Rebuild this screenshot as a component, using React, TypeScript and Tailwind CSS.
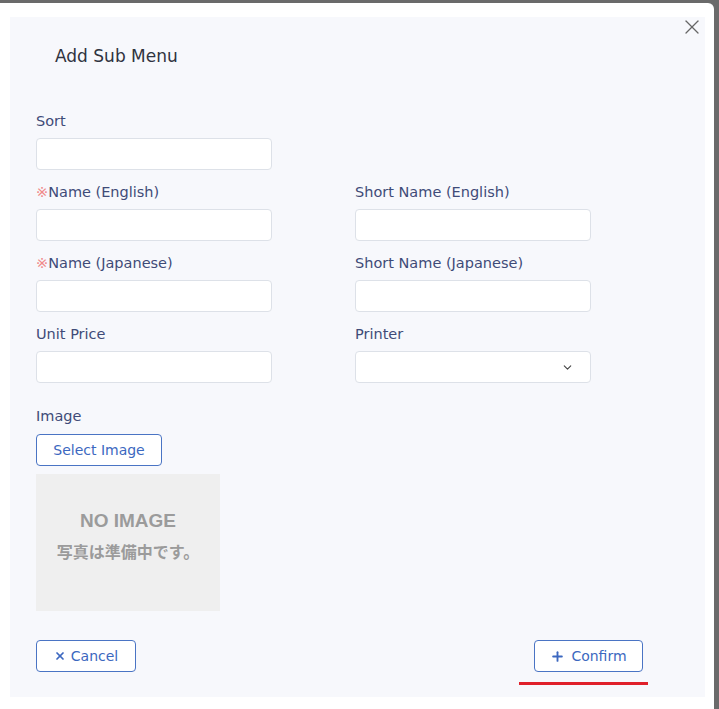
import { X, Plus, ChevronDown } from "lucide-react";

const font = { fontFamily: '"DejaVu Sans", "Noto Sans CJK JP", sans-serif' };

function Field({ label, required, select }: { label: string; required?: boolean; select?: boolean }) {
  return (
    <div className="flex flex-col">
      <label className="text-[14.5px] leading-[20px] text-[#3f4b78] mb-[7px] whitespace-nowrap">
        {required && <span className="text-[#f08a8a]">※</span>}
        {label}
      </label>
      <div className="relative h-[32px] w-[236px] rounded-[4px] border border-[#dde1e8] bg-white">
        {select && (
          <ChevronDown className="absolute right-[16px] top-[9px] w-[13px] h-[13px] text-[#444]" strokeWidth={2} />
        )}
      </div>
    </div>
  );
}

export default function App() {
  return (
    <div className="w-[719px] h-[709px] bg-[#6a6a6a] pt-[3px] pr-[5px] overflow-hidden" style={font}>
      <div className="h-[706px] bg-white rounded-tr-[6px] pl-[10px] pr-[9px] pt-[14px] pb-[12px]">
        <div className="relative h-full bg-[#f7f8fc] pl-[26px] pt-[27px] pr-[62px] pb-[25px] flex flex-col">
          <button className="absolute right-[1px] -top-[2px] text-[#666]">
            <X className="w-[24px] h-[24px]" strokeWidth={1.3} />
          </button>

          <h2 className="pl-[19px] text-[17px] leading-[24px] text-[#2f3340]">Add Sub Menu</h2>

          <div className="mt-[43px] grid grid-cols-[236px_236px] gap-x-[83px] gap-y-[12px]">
            <Field label="Sort" />
            <div />
            <Field label="Name (English)" required />
            <Field label="Short Name (English)" />
            <Field label="Name (Japanese)" required />
            <Field label="Short Name (Japanese)" />
            <Field label="Unit Price" />
            <Field label="Printer" select />
          </div>

          <div className="mt-[23px] text-[14.5px] leading-[20px] text-[#3f4b78]">Image</div>
          <button className="mt-[8px] w-[126px] h-[32px] rounded-[4px] border border-[#4a74c4] bg-white text-[14px] text-[#3c68c0]">
            Select Image
          </button>
          <div className="mt-[8px] w-[184px] h-[137px] bg-[#efefef] flex flex-col items-center justify-center text-[#9b9b9b] font-bold">
            <div
              className="text-[19px] leading-[22px] -mt-[14px]"
              style={{ fontFamily: '"Liberation Sans", Arial, sans-serif' }}
            >
              NO IMAGE
            </div>
            <div className="text-[16px] leading-[20px] mt-[9px]" style={{ fontFamily: '"Noto Sans CJK JP", sans-serif' }}>
              写真は準備中です。
            </div>
          </div>

          <div className="mt-auto flex justify-between items-start">
            <button className="w-[100px] h-[32px] rounded-[4px] border border-[#4a74c4] bg-white text-[14px] text-[#3c68c0] flex items-center justify-center gap-[5px]">
              <X className="w-[12px] h-[12px]" strokeWidth={3.5} />
              Cancel
            </button>
            <div className="relative">
              <button className="w-[109px] h-[32px] rounded-[4px] border border-[#4a74c4] bg-white text-[14px] text-[#3c68c0] flex items-center justify-center gap-[6px]">
                <Plus className="w-[15px] h-[15px]" strokeWidth={3} />
                Confirm
              </button>
              <div className="absolute -left-[15px] -right-[5px] top-[42px] h-[3px] bg-[#e0202a]" />
            </div>
          </div>
        </div>
      </div>
    </div>
  );
}
